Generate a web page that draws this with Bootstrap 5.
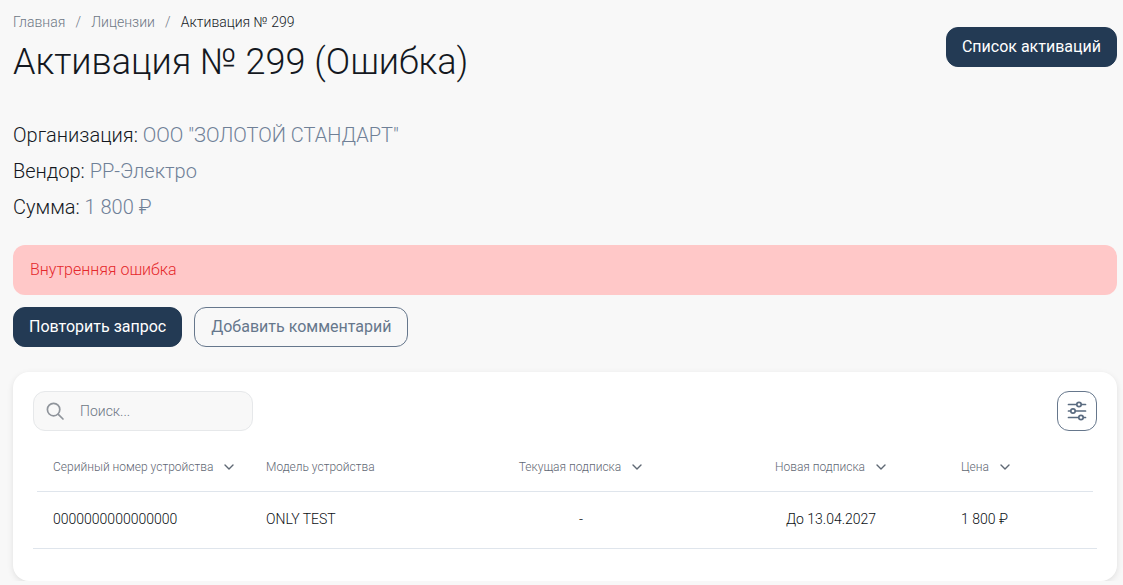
<!DOCTYPE html>
<html lang="ru">
<head>
<meta charset="utf-8">
<title>Активация № 299</title>
<link href="https://cdn.jsdelivr.net/npm/bootstrap@5.3.0/dist/css/bootstrap.min.css" rel="stylesheet">
<style>
body{background:#f8f8f8;font-family:Roboto,"Liberation Sans",sans-serif;font-weight:300;color:#14181f;}
.page-wrap{padding:12px 6px 0 13px;}
.crumbs{--bs-breadcrumb-divider-color:#6e7784;--bs-breadcrumb-item-active-color:#14181f;--bs-breadcrumb-item-padding-x:10.2px;font-size:14px;line-height:20px;margin-bottom:0;font-weight:300;}
.crumbs a{color:#6e7784;text-decoration:none;}
.page-title{font-size:36px;font-weight:300;line-height:42px;margin:9px 0 0;}
.btn-dark-navy{background:#233a54;color:#fff;border:1px solid #233a54;border-radius:12px;height:40px;font-size:16px;font-weight:400;padding:0 15px;}
.btn-dark-navy:hover{background:#233a54;color:#fff;}
.head-btn{margin-top:15px;}
.btn-line{background:transparent;color:#66778c;border:1px solid #66778c;border-radius:12px;height:40px;font-size:16px;font-weight:400;padding:0 16px;}
.action-row{column-gap:12px;margin-top:12px;}
.info-block{margin-top:34px;font-size:20px;line-height:36px;}
.info-block span{color:#6f8097;}
.err-box{background:#ffc8c8;color:#e5282c;border-radius:12px;height:50px;padding:0 17px;font-size:16px;margin-top:20px;}
.panel{background:#fff;border-radius:16px;box-shadow:0 2px 6px rgba(0,0,0,.1);padding:19px 20px 32px;margin-top:25px;}
.search-box{width:220px;height:40px;background:#f8f8f8;border:1px solid #e6e8ea;border-radius:12px;padding-left:11px;gap:15px;color:#6e7784;font-size:14px;}
.search-box input{border:0;background:transparent;outline:0;padding:0;width:150px;font-weight:300;font-size:14px;color:#14181f;}
.search-box input::placeholder{color:#6e7784;opacity:1;}
.icon-btn{width:40px;height:40px;border:1px solid #66778c;border-radius:12px;background:#fff;padding:0;}
.data-tbl{table-layout:fixed;width:1064px;margin:20px 0 0;border-collapse:collapse;}
.data-tbl th,.data-tbl td{border:0;vertical-align:middle;}
.data-tbl th{height:41px;padding:0 0 10px;font-size:12px;font-weight:300;color:#5f6874;background:linear-gradient(#dfe5ec,#dfe5ec) no-repeat bottom/100% 1px;}
.data-tbl th:first-child{background-position:4px 100%;}
.data-tbl th:last-child{background-size:calc(100% - 4px) 1px;background-position:0 100%;}
.data-tbl td{padding:17px 0 19px;line-height:20px;font-size:14px;font-weight:300;color:#0b0f14;border-bottom:1px solid #dfe5ec;}
.data-tbl th.cell-left,.data-tbl td.cell-left{padding-left:20px;}
.chev{margin-left:10px;}
</style>
</head>
<body>
<div class="page-wrap">
  <div class="d-flex justify-content-between align-items-start">
    <div>
      <nav aria-label="breadcrumb">
        <ol class="breadcrumb crumbs">
          <li class="breadcrumb-item"><a href="#">Главная</a></li>
          <li class="breadcrumb-item"><a href="#">Лицензии</a></li>
          <li class="breadcrumb-item active" aria-current="page">Активация № 299</li>
        </ol>
      </nav>
      <h1 class="page-title">Активация № 299 (Ошибка)</h1>
    </div>
    <button type="button" class="btn btn-dark-navy head-btn flex-shrink-0">Список активаций</button>
  </div>

  <div class="info-block">
    <div>Организация: <span>ООО "ЗОЛОТОЙ СТАНДАРТ"</span></div>
    <div>Вендор: <span>РР-Электро</span></div>
    <div>Сумма: <span>1 800 ₽</span></div>
  </div>

  <div class="err-box d-flex align-items-center">Внутренняя ошибка</div>

  <div class="d-flex action-row">
    <button type="button" class="btn btn-dark-navy">Повторить запрос</button>
    <button type="button" class="btn btn-line">Добавить комментарий</button>
  </div>

  <div class="panel">
    <div class="d-flex justify-content-between align-items-center">
      <label class="search-box d-flex align-items-center mb-0">
        <svg width="20" height="20" viewBox="0 0 20 20" fill="none" stroke="#8f949b" stroke-width="1.7" stroke-linecap="round"><circle cx="8.6" cy="8.6" r="6.2"/><line x1="13.3" y1="13.3" x2="18" y2="18"/></svg>
        <input type="text" placeholder="Поиск...">
      </label>
      <button type="button" class="icon-btn d-flex align-items-center justify-content-center" aria-label="Настройки">
        <svg width="20" height="20" viewBox="0 0 20 20" fill="none" stroke="#5a6b80" stroke-width="1.7" stroke-linecap="round">
          <line x1="1.5" y1="3.5" x2="18.5" y2="3.5"/><line x1="1.5" y1="10" x2="18.5" y2="10"/><line x1="1.5" y1="16.5" x2="18.5" y2="16.5"/>
          <circle cx="12" cy="3.5" r="2.2" fill="#fff"/><circle cx="6" cy="10" r="2.2" fill="#fff"/><circle cx="14" cy="16.5" r="2.2" fill="#fff"/>
        </svg>
      </button>
    </div>

    <table class="table data-tbl">
      <colgroup><col style="width:213px"><col style="width:195px"><col style="width:280px"><col style="width:220px"><col style="width:156px"></colgroup>
      <thead>
        <tr>
          <th class="cell-left">Серийный номер устройства<svg class="chev" width="12" height="8" viewBox="0 0 12 8" fill="none" stroke="#5f6874" stroke-width="1.4" stroke-linecap="round" stroke-linejoin="round"><path d="M2 2l4 4 4-4"/></svg></th>
          <th class="cell-left">Модель устройства</th>
          <th class="text-center">Текущая подписка<svg class="chev" width="12" height="8" viewBox="0 0 12 8" fill="none" stroke="#5f6874" stroke-width="1.4" stroke-linecap="round" stroke-linejoin="round"><path d="M2 2l4 4 4-4"/></svg></th>
          <th class="text-center">Новая подписка<svg class="chev" width="12" height="8" viewBox="0 0 12 8" fill="none" stroke="#5f6874" stroke-width="1.4" stroke-linecap="round" stroke-linejoin="round"><path d="M2 2l4 4 4-4"/></svg></th>
          <th class="cell-left">Цена<svg class="chev" width="12" height="8" viewBox="0 0 12 8" fill="none" stroke="#5f6874" stroke-width="1.4" stroke-linecap="round" stroke-linejoin="round"><path d="M2 2l4 4 4-4"/></svg></th>
        </tr>
      </thead>
      <tbody>
        <tr>
          <td class="cell-left">0000000000000000</td>
          <td class="cell-left">ONLY TEST</td>
          <td class="text-center">-</td>
          <td class="text-center">До 13.04.2027</td>
          <td class="cell-left">1 800 ₽</td>
        </tr>
      </tbody>
    </table>
  </div>
</div>
</body>
</html>
